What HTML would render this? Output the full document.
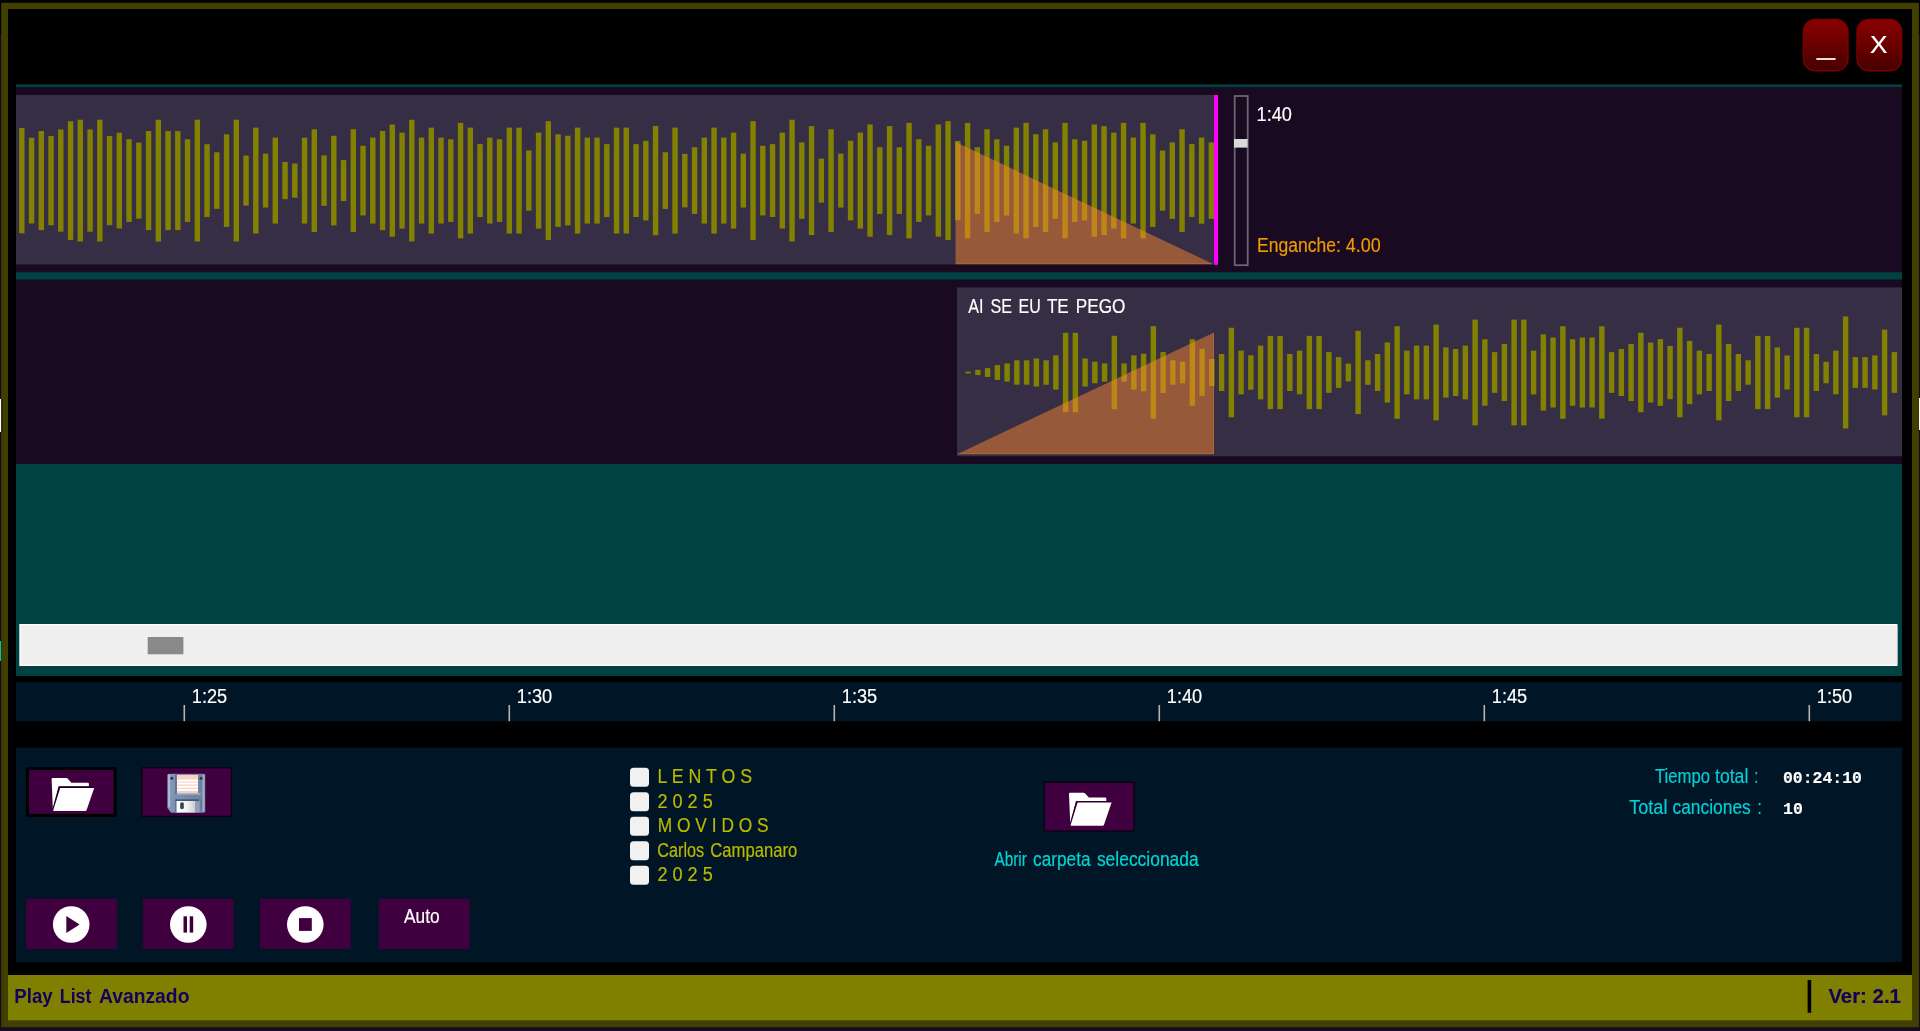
<!DOCTYPE html>
<html lang="es"><head><meta charset="utf-8"><title>Play List Avanzado</title>
<style>html,body{margin:0;padding:0;background:#000;overflow:hidden}svg{display:block}text{white-space:pre}</style>
</head><body>
<svg width="1920" height="1031" viewBox="0 0 1920 1031">
<rect x="0" y="0" width="1920" height="1031" fill="#000000"/>
<rect x="0" y="1027" width="1920" height="4" fill="#180a22"/>
<rect x="0" y="34" width="1.3" height="997" fill="#160a20"/><rect x="1918.8" y="34" width="1.2" height="997" fill="#160a20"/>
<rect x="1.2" y="2.8" width="1917.7" height="1024.4" fill="#414000"/>
<rect x="8" y="9" width="1904" height="1011.5" fill="#000000"/>
<rect x="0" y="399" width="1.3" height="33" fill="#ffffff"/><rect x="1.3" y="399" width="1.3" height="33" fill="#1c1c00"/><rect x="1919" y="398" width="1" height="32" fill="#ffffff"/><rect x="0" y="641" width="1" height="20" fill="#00c8a0"/>
<rect x="16" y="84.4" width="1886" height="591.6" fill="#004242"/>
<rect x="16" y="87" width="1886" height="185.3" fill="#190a22"/>
<rect x="16" y="279.4" width="1886" height="184.6" fill="#190a22"/>
<rect x="16" y="95" width="1198" height="169.4" fill="#362e44"/>
<rect x="957" y="287.4" width="945" height="168.8" fill="#362e44"/>
<g fill="#838200"><rect x="19.10" y="127.94" width="5.40" height="105.33"/><rect x="28.85" y="137.72" width="5.40" height="85.77"/><rect x="38.60" y="131.04" width="5.40" height="99.12"/><rect x="48.35" y="136.01" width="5.40" height="89.18"/><rect x="58.10" y="129.49" width="5.40" height="102.22"/><rect x="67.85" y="121.26" width="5.40" height="118.67"/><rect x="77.60" y="119.71" width="5.40" height="121.78"/><rect x="87.35" y="129.49" width="5.40" height="102.22"/><rect x="97.10" y="119.71" width="5.40" height="121.78"/><rect x="106.85" y="136.01" width="5.40" height="89.18"/><rect x="116.60" y="132.75" width="5.40" height="95.70"/><rect x="126.35" y="139.27" width="5.40" height="82.67"/><rect x="136.10" y="142.53" width="5.40" height="76.15"/><rect x="145.85" y="131.04" width="5.40" height="99.12"/><rect x="155.60" y="119.71" width="5.40" height="121.78"/><rect x="165.35" y="131.04" width="5.40" height="99.12"/><rect x="175.10" y="131.04" width="5.40" height="99.12"/><rect x="184.85" y="139.27" width="5.40" height="82.67"/><rect x="194.60" y="119.71" width="5.40" height="121.78"/><rect x="204.35" y="144.23" width="5.40" height="72.73"/><rect x="214.10" y="152.30" width="5.40" height="56.59"/><rect x="223.85" y="134.30" width="5.40" height="92.60"/><rect x="233.60" y="119.71" width="5.40" height="121.78"/><rect x="243.35" y="155.56" width="5.40" height="50.07"/><rect x="253.10" y="127.62" width="5.40" height="105.95"/><rect x="262.85" y="153.62" width="5.40" height="53.95"/><rect x="272.60" y="137.62" width="5.40" height="85.95"/><rect x="282.35" y="162.00" width="5.40" height="37.20"/><rect x="292.10" y="163.50" width="5.40" height="34.20"/><rect x="301.85" y="137.62" width="5.40" height="85.95"/><rect x="311.60" y="129.25" width="5.40" height="102.70"/><rect x="321.35" y="155.38" width="5.40" height="50.45"/><rect x="331.10" y="135.75" width="5.40" height="89.70"/><rect x="340.85" y="160.12" width="5.40" height="40.95"/><rect x="350.60" y="129.25" width="5.40" height="102.70"/><rect x="360.35" y="145.75" width="5.40" height="69.70"/><rect x="370.10" y="137.62" width="5.40" height="85.95"/><rect x="379.85" y="131.00" width="5.40" height="99.20"/><rect x="389.60" y="124.50" width="5.40" height="112.20"/><rect x="399.35" y="132.62" width="5.40" height="95.95"/><rect x="409.10" y="119.75" width="5.40" height="121.70"/><rect x="418.85" y="137.62" width="5.40" height="85.95"/><rect x="428.60" y="127.62" width="5.40" height="105.95"/><rect x="438.35" y="137.62" width="5.40" height="85.95"/><rect x="448.10" y="139.25" width="5.40" height="82.70"/><rect x="457.85" y="122.88" width="5.40" height="115.45"/><rect x="467.60" y="127.62" width="5.40" height="105.95"/><rect x="477.35" y="144.12" width="5.40" height="72.95"/><rect x="487.10" y="137.62" width="5.40" height="85.95"/><rect x="496.85" y="139.25" width="5.40" height="82.70"/><rect x="506.60" y="127.62" width="5.40" height="105.95"/><rect x="516.35" y="127.62" width="5.40" height="105.95"/><rect x="526.10" y="150.50" width="5.40" height="60.20"/><rect x="535.85" y="132.62" width="5.40" height="95.95"/><rect x="545.60" y="121.12" width="5.40" height="118.95"/><rect x="555.35" y="134.25" width="5.40" height="92.70"/><rect x="565.10" y="135.75" width="5.40" height="89.70"/><rect x="574.85" y="127.62" width="5.40" height="105.95"/><rect x="584.60" y="137.62" width="5.40" height="85.95"/><rect x="594.35" y="137.62" width="5.40" height="85.95"/><rect x="604.10" y="144.12" width="5.40" height="72.95"/><rect x="613.85" y="127.62" width="5.40" height="105.95"/><rect x="623.60" y="127.62" width="5.40" height="105.95"/><rect x="633.35" y="144.12" width="5.40" height="72.95"/><rect x="643.10" y="140.75" width="5.40" height="79.70"/><rect x="652.85" y="126.00" width="5.40" height="109.20"/><rect x="662.60" y="152.25" width="5.40" height="56.70"/><rect x="672.35" y="127.62" width="5.40" height="105.95"/><rect x="682.10" y="153.88" width="5.40" height="53.45"/><rect x="691.85" y="147.25" width="5.40" height="66.70"/><rect x="701.60" y="137.62" width="5.40" height="85.95"/><rect x="711.35" y="127.62" width="5.40" height="105.95"/><rect x="721.10" y="137.62" width="5.40" height="85.95"/><rect x="730.85" y="132.62" width="5.40" height="95.95"/><rect x="740.60" y="153.62" width="5.40" height="53.95"/><rect x="750.35" y="121.12" width="5.40" height="118.95"/><rect x="760.10" y="145.75" width="5.40" height="69.70"/><rect x="769.85" y="144.12" width="5.40" height="72.95"/><rect x="779.60" y="132.62" width="5.40" height="95.95"/><rect x="789.35" y="119.75" width="5.40" height="121.70"/><rect x="799.10" y="142.38" width="5.40" height="76.45"/><rect x="808.85" y="126.12" width="5.40" height="108.95"/><rect x="818.60" y="158.62" width="5.40" height="43.95"/><rect x="828.35" y="129.25" width="5.40" height="102.70"/><rect x="838.10" y="153.62" width="5.40" height="53.95"/><rect x="847.85" y="140.75" width="5.40" height="79.70"/><rect x="857.60" y="132.62" width="5.40" height="95.95"/><rect x="867.35" y="124.50" width="5.40" height="112.20"/><rect x="877.10" y="147.25" width="5.40" height="66.70"/><rect x="886.85" y="126.12" width="5.40" height="108.95"/><rect x="896.60" y="147.25" width="5.40" height="66.70"/><rect x="906.35" y="122.88" width="5.40" height="115.45"/><rect x="916.10" y="139.25" width="5.40" height="82.70"/><rect x="925.85" y="145.75" width="5.40" height="69.70"/><rect x="935.60" y="124.50" width="5.40" height="112.20"/><rect x="945.35" y="121.12" width="5.40" height="118.95"/><rect x="955.10" y="141.00" width="5.40" height="79.20"/><rect x="964.85" y="122.88" width="5.40" height="115.45"/><rect x="974.60" y="147.25" width="5.40" height="66.70"/><rect x="984.35" y="129.25" width="5.40" height="102.70"/><rect x="994.10" y="139.25" width="5.40" height="82.70"/><rect x="1003.85" y="145.75" width="5.40" height="69.70"/><rect x="1013.60" y="127.62" width="5.40" height="105.95"/><rect x="1023.35" y="122.88" width="5.40" height="115.45"/><rect x="1033.10" y="134.25" width="5.40" height="92.70"/><rect x="1042.85" y="129.25" width="5.40" height="102.70"/><rect x="1052.60" y="142.38" width="5.40" height="76.45"/><rect x="1062.35" y="122.88" width="5.40" height="115.45"/><rect x="1072.10" y="139.25" width="5.40" height="82.70"/><rect x="1081.85" y="140.75" width="5.40" height="79.70"/><rect x="1091.60" y="124.50" width="5.40" height="112.20"/><rect x="1101.35" y="126.12" width="5.40" height="108.95"/><rect x="1111.10" y="132.62" width="5.40" height="95.95"/><rect x="1120.85" y="122.88" width="5.40" height="115.45"/><rect x="1130.60" y="137.62" width="5.40" height="85.95"/><rect x="1140.35" y="122.88" width="5.40" height="115.45"/><rect x="1150.10" y="134.25" width="5.40" height="92.70"/><rect x="1159.85" y="150.50" width="5.40" height="60.20"/><rect x="1169.60" y="142.38" width="5.40" height="76.45"/><rect x="1179.35" y="129.25" width="5.40" height="102.70"/><rect x="1189.10" y="144.12" width="5.40" height="72.95"/><rect x="1198.85" y="137.53" width="5.40" height="86.13"/><rect x="1208.60" y="142.38" width="5.40" height="76.45"/></g>
<g fill="#838200"><rect x="965.40" y="371.60" width="5.40" height="1.80"/><rect x="975.15" y="369.90" width="5.40" height="5.20"/><rect x="984.90" y="368.10" width="5.40" height="8.80"/><rect x="994.65" y="365.10" width="5.40" height="14.80"/><rect x="1004.40" y="363.40" width="5.40" height="18.20"/><rect x="1014.15" y="360.30" width="5.40" height="24.40"/><rect x="1023.90" y="360.30" width="5.40" height="24.40"/><rect x="1033.65" y="358.50" width="5.40" height="28.00"/><rect x="1043.40" y="360.30" width="5.40" height="24.40"/><rect x="1053.15" y="355.40" width="5.40" height="34.20"/><rect x="1062.90" y="332.80" width="5.40" height="79.40"/><rect x="1072.65" y="332.80" width="5.40" height="79.40"/><rect x="1082.40" y="358.50" width="5.40" height="28.00"/><rect x="1092.15" y="361.70" width="5.40" height="21.60"/><rect x="1101.90" y="363.40" width="5.40" height="18.20"/><rect x="1111.65" y="335.80" width="5.40" height="73.40"/><rect x="1121.40" y="363.40" width="5.40" height="18.20"/><rect x="1131.15" y="355.40" width="5.40" height="34.20"/><rect x="1140.90" y="353.70" width="5.40" height="37.60"/><rect x="1150.65" y="326.20" width="5.40" height="92.60"/><rect x="1160.40" y="352.00" width="5.40" height="41.00"/><rect x="1170.15" y="360.30" width="5.40" height="24.40"/><rect x="1179.90" y="361.70" width="5.40" height="21.60"/><rect x="1189.65" y="339.25" width="5.40" height="66.50"/><rect x="1199.40" y="349.00" width="5.40" height="47.00"/><rect x="1209.15" y="359.00" width="5.40" height="27.00"/><rect x="1218.90" y="354.00" width="5.40" height="37.00"/><rect x="1228.65" y="327.75" width="5.40" height="89.50"/><rect x="1238.40" y="350.62" width="5.40" height="43.75"/><rect x="1248.15" y="355.25" width="5.40" height="34.50"/><rect x="1257.90" y="345.62" width="5.40" height="53.75"/><rect x="1267.65" y="335.88" width="5.40" height="73.25"/><rect x="1277.40" y="335.88" width="5.40" height="73.25"/><rect x="1287.15" y="354.00" width="5.40" height="37.00"/><rect x="1296.90" y="350.62" width="5.40" height="43.75"/><rect x="1306.65" y="335.88" width="5.40" height="73.25"/><rect x="1316.40" y="335.88" width="5.40" height="73.25"/><rect x="1326.15" y="352.12" width="5.40" height="40.75"/><rect x="1335.90" y="357.12" width="5.40" height="30.75"/><rect x="1345.65" y="363.62" width="5.40" height="17.75"/><rect x="1355.40" y="330.88" width="5.40" height="83.25"/><rect x="1365.15" y="360.25" width="5.40" height="24.50"/><rect x="1374.90" y="354.00" width="5.40" height="37.00"/><rect x="1384.65" y="342.50" width="5.40" height="60.00"/><rect x="1394.40" y="326.25" width="5.40" height="92.50"/><rect x="1404.15" y="350.62" width="5.40" height="43.75"/><rect x="1413.90" y="345.62" width="5.40" height="53.75"/><rect x="1423.65" y="345.62" width="5.40" height="53.75"/><rect x="1433.40" y="324.62" width="5.40" height="95.75"/><rect x="1443.15" y="347.38" width="5.40" height="50.25"/><rect x="1452.90" y="349.00" width="5.40" height="47.00"/><rect x="1462.65" y="345.62" width="5.40" height="53.75"/><rect x="1472.40" y="319.62" width="5.40" height="105.75"/><rect x="1482.15" y="339.25" width="5.40" height="66.50"/><rect x="1491.90" y="352.12" width="5.40" height="40.75"/><rect x="1501.65" y="344.00" width="5.40" height="57.00"/><rect x="1511.40" y="319.62" width="5.40" height="105.75"/><rect x="1521.15" y="319.62" width="5.40" height="105.75"/><rect x="1530.90" y="350.62" width="5.40" height="43.75"/><rect x="1540.65" y="334.38" width="5.40" height="76.25"/><rect x="1550.40" y="337.50" width="5.40" height="70.00"/><rect x="1560.15" y="326.25" width="5.40" height="92.50"/><rect x="1569.90" y="339.25" width="5.40" height="66.50"/><rect x="1579.65" y="337.50" width="5.40" height="70.00"/><rect x="1589.40" y="337.50" width="5.40" height="70.00"/><rect x="1599.15" y="326.25" width="5.40" height="92.50"/><rect x="1608.90" y="352.12" width="5.40" height="40.75"/><rect x="1618.65" y="349.00" width="5.40" height="47.00"/><rect x="1628.40" y="344.00" width="5.40" height="57.00"/><rect x="1638.15" y="332.75" width="5.40" height="79.50"/><rect x="1647.90" y="342.50" width="5.40" height="60.00"/><rect x="1657.65" y="339.12" width="5.40" height="66.75"/><rect x="1667.40" y="345.88" width="5.40" height="53.25"/><rect x="1677.15" y="327.75" width="5.40" height="89.50"/><rect x="1686.90" y="340.88" width="5.40" height="63.25"/><rect x="1696.65" y="350.62" width="5.40" height="43.75"/><rect x="1706.40" y="354.00" width="5.40" height="37.00"/><rect x="1716.15" y="324.62" width="5.40" height="95.75"/><rect x="1725.90" y="344.00" width="5.40" height="57.00"/><rect x="1735.65" y="354.00" width="5.40" height="37.00"/><rect x="1745.40" y="360.25" width="5.40" height="24.50"/><rect x="1755.15" y="335.88" width="5.40" height="73.25"/><rect x="1764.90" y="335.88" width="5.40" height="73.25"/><rect x="1774.65" y="347.38" width="5.40" height="50.25"/><rect x="1784.40" y="355.50" width="5.40" height="34.00"/><rect x="1794.15" y="327.75" width="5.40" height="89.50"/><rect x="1803.90" y="327.75" width="5.40" height="89.50"/><rect x="1813.65" y="354.00" width="5.40" height="37.00"/><rect x="1823.40" y="361.75" width="5.40" height="21.50"/><rect x="1833.15" y="350.62" width="5.40" height="43.75"/><rect x="1842.90" y="316.50" width="5.40" height="112.00"/><rect x="1852.65" y="357.12" width="5.40" height="30.75"/><rect x="1862.40" y="357.12" width="5.40" height="30.75"/><rect x="1872.15" y="355.50" width="5.40" height="34.00"/><rect x="1881.90" y="329.62" width="5.40" height="85.75"/><rect x="1891.65" y="352.12" width="5.40" height="40.75"/></g>
<path d="M955.5 142 L1213.6 264.2 L955.5 264.2 Z" fill="#ff8a30" fill-opacity="0.48"/>
<path d="M956 263.7 H1212" fill="none" stroke="#ff9a40" stroke-opacity="0.22" stroke-width="1"/>
<path d="M957 454.2 L1214 332.4 L1214 454.2 Z" fill="#ff8a30" fill-opacity="0.48"/>
<path d="M958 453.7 H1213.5 V333" fill="none" stroke="#ff9a40" stroke-opacity="0.22" stroke-width="1"/>
<rect x="1214" y="95" width="4" height="169.8" fill="#ff00ff"/>
<rect x="1234.7" y="96" width="13" height="169.2" fill="#190a22" stroke="#69676e" stroke-width="1.8"/>
<rect x="1234" y="139" width="13.6" height="8.6" fill="#d9d9d9"/>
<rect x="19.3" y="624" width="1878.1" height="42" fill="#ffffff"/>
<rect x="20.6" y="625.2" width="1876.8" height="39.6" fill="#efefef"/>
<rect x="147.7" y="637" width="35.7" height="17.3" fill="#898989"/>
<rect x="16" y="682.2" width="1886" height="39" fill="#001526"/>
<rect x="183.50" y="705" width="1.6" height="16.2" fill="#b4b4b4"/>
<rect x="508.50" y="705" width="1.6" height="16.2" fill="#b4b4b4"/>
<rect x="833.50" y="705" width="1.6" height="16.2" fill="#b4b4b4"/>
<rect x="1158.50" y="705" width="1.6" height="16.2" fill="#b4b4b4"/>
<rect x="1483.50" y="705" width="1.6" height="16.2" fill="#b4b4b4"/>
<rect x="1808.50" y="705" width="1.6" height="16.2" fill="#b4b4b4"/>
<rect x="16" y="747.6" width="1886" height="214.5" fill="#001526"/>
<rect x="26" y="767.2" width="90.6" height="49.7" fill="#000000"/>
<rect x="29" y="770" width="84.6" height="43.8" fill="#400040"/>
<g transform="translate(51.60 777.80) scale(1.000)"><path fill="#ffffff" d="M0 1.4 Q0 0.2 1.2 0.2 L14.6 0.2 Q15.6 0.2 16.2 1 L19.8 5 L36.2 5 Q37.3 5 37.3 6.1 L37.3 8.4 L7 8.4 L1.2 30.2 Z"/><path fill="#1c001c" d="M7.3 8.6 L41.6 8.6 L41.6 10.4 L8.9 10.4 L2.2 32.4 L1 31.6 Z"/><path fill="#ffffff" d="M8.6 10.1 L42.6 10.1 L35 32.3 Q34.6 33.2 33.6 33.2 L2.4 33.2 Q1.4 33.2 1.7 32.2 Z"/></g>
<rect x="141.3" y="767.2" width="90.6" height="49.7" fill="#0a0010"/>
<rect x="142.5" y="768.4" width="88.2" height="47.3" fill="#400040"/>
<g transform="translate(167.60 774.10)"><defs><linearGradient id="fg" x1="0" y1="0" x2="1" y2="0"><stop offset="0" stop-color="#8398b8"/><stop offset="0.5" stop-color="#778ba8"/><stop offset="1" stop-color="#6d819f"/></linearGradient><linearGradient id="sg" x1="0" y1="0" x2="1" y2="0"><stop offset="0" stop-color="#ffffff"/><stop offset="0.55" stop-color="#f2f2f2"/><stop offset="1" stop-color="#cfcfcf"/></linearGradient></defs><path d="M1.2 0 H36.2 Q37.4 0 37.4 1.2 V37.1 Q37.4 38.3 36.2 38.3 H3.4 L0 33.7 V1.2 Q0 0 1.2 0 Z" fill="url(#fg)" stroke="#8fa3c2" stroke-width="0.4"/><rect x="0.6" y="0.8" width="1.9" height="32.4" fill="#aebdd6"/><rect x="34.9" y="0.8" width="1.9" height="36.6" fill="#9fb0cb"/><rect x="7.7" y="0.5" width="1.7" height="19.6" fill="#52658a"/><rect x="9.3" y="0.9" width="21.1" height="18.2" fill="#ffffff"/><rect x="9.3" y="0.9" width="21.1" height="4.6" fill="#fcd2c4"/><g fill="#fbcfc0"><rect x="9.3" y="7.4" width="21.1" height="1.1"/><rect x="9.3" y="10.4" width="21.1" height="1.2"/><rect x="9.3" y="13.8" width="21.1" height="1.1"/><rect x="9.3" y="16.8" width="21.1" height="2.3"/></g><rect x="9.3" y="19.1" width="23.5" height="1.3" fill="#a9bad4"/><circle cx="4.2" cy="4.1" r="1.5" fill="#2c3648"/><circle cx="33.5" cy="4.1" r="1.5" fill="#2c3648"/><rect x="8" y="26.9" width="24" height="11.4" fill="#8ea0bd"/><rect x="7.6" y="25.2" width="23.8" height="1.8" fill="#465878"/><rect x="7.6" y="26.9" width="1.5" height="11.4" fill="#5a6d8f"/><rect x="9" y="26.9" width="18.4" height="11.4" fill="url(#sg)"/><rect x="12.6" y="28.1" width="3.6" height="7" rx="1.6" fill="#34405a"/><rect x="33.2" y="25.4" width="0.9" height="9" fill="#586c8e"/></g>
<rect x="1043.8" y="781.6" width="90.8" height="50" fill="#0a0010"/>
<rect x="1045" y="782.8" width="88.4" height="47.6" fill="#400040"/>
<g transform="translate(1069.00 792.50) scale(1.000)"><path fill="#ffffff" d="M0 1.4 Q0 0.2 1.2 0.2 L14.6 0.2 Q15.6 0.2 16.2 1 L19.8 5 L36.2 5 Q37.3 5 37.3 6.1 L37.3 8.4 L7 8.4 L1.2 30.2 Z"/><path fill="#2c002c" d="M7.3 8.6 L41.6 8.6 L41.6 10.4 L8.9 10.4 L2.2 32.4 L1 31.6 Z"/><path fill="#ffffff" d="M8.6 10.1 L42.6 10.1 L35 32.3 Q34.6 33.2 33.6 33.2 L2.4 33.2 Q1.4 33.2 1.7 32.2 Z"/></g>
<rect x="26.00" y="898.8" width="90.8" height="50" fill="#400040"/>
<rect x="142.90" y="898.8" width="90.8" height="50" fill="#400040"/>
<rect x="260.00" y="898.8" width="90.8" height="50" fill="#400040"/>
<rect x="378.80" y="898.8" width="90.8" height="50" fill="#400040"/>
<circle cx="71.2" cy="924.5" r="18.3" fill="#ffffff"/><path d="M66.3 916 L79.6 924.5 L66.3 933 Z" fill="#400040"/>
<circle cx="188.3" cy="924.5" r="18.3" fill="#ffffff"/><rect x="183.5" y="916.3" width="3.5" height="16.3" fill="#400040"/><rect x="189.7" y="916.3" width="3.5" height="16.3" fill="#400040"/>
<circle cx="305.3" cy="924.5" r="18.3" fill="#ffffff"/><rect x="299" y="918.1" width="12.8" height="12.8" fill="#400040"/>
<rect x="630" y="767.80" width="19" height="19" rx="3.5" fill="#f1f1f1"/>
<rect x="630" y="792.30" width="19" height="19" rx="3.5" fill="#f1f1f1"/>
<rect x="630" y="816.80" width="19" height="19" rx="3.5" fill="#f1f1f1"/>
<rect x="630" y="841.30" width="19" height="19" rx="3.5" fill="#f1f1f1"/>
<rect x="630" y="865.80" width="19" height="19" rx="3.5" fill="#f1f1f1"/>
<rect x="8" y="975" width="1904" height="45.5" fill="#808000"/>
<rect x="1807.6" y="980" width="3.6" height="32.8" fill="#000000"/>
<defs><linearGradient id="rg" x1="0" y1="0" x2="0" y2="1"><stop offset="0" stop-color="#8a0000"/><stop offset="1" stop-color="#470000"/></linearGradient></defs>
<rect x="1803.4" y="19.4" width="44.6" height="51.4" rx="12" fill="url(#rg)" stroke="#7c0000" stroke-width="1.4"/>
<rect x="1857" y="19.4" width="44.6" height="51.4" rx="12" fill="url(#rg)" stroke="#7c0000" stroke-width="1.4"/>
<g id="labels" style="filter:blur(0.4px)" stroke-width="0.18">
<text x="1256.60" y="121.30" textLength="35.40" lengthAdjust="spacingAndGlyphs" font-family="'Liberation Sans', Arial, sans-serif" font-size="20.00" font-weight="normal" fill="#ffffff" stroke="#ffffff">1:40</text>
<text y="251.70" font-family="'Liberation Sans', Arial, sans-serif" font-size="20.00" font-weight="normal" fill="#f09c00" stroke="#f09c00"><tspan x="1257.10" textLength="83.69" lengthAdjust="spacingAndGlyphs">Enganche:</tspan> <tspan x="1345.80" textLength="34.98" lengthAdjust="spacingAndGlyphs">4.00</tspan></text>
<text y="313.00" font-family="'Liberation Sans', Arial, sans-serif" font-size="20.00" font-weight="normal" fill="#ffffff" stroke="#ffffff"><tspan x="968.30" textLength="15.20" lengthAdjust="spacingAndGlyphs">AI</tspan> <tspan x="990.50" textLength="21.48" lengthAdjust="spacingAndGlyphs">SE</tspan> <tspan x="1018.60" textLength="22.19" lengthAdjust="spacingAndGlyphs">EU</tspan> <tspan x="1046.90" textLength="21.81" lengthAdjust="spacingAndGlyphs">TE</tspan> <tspan x="1075.70" textLength="49.69" lengthAdjust="spacingAndGlyphs">PEGO</tspan></text>
<text x="191.80" y="703.20" textLength="35.40" lengthAdjust="spacingAndGlyphs" font-family="'Liberation Sans', Arial, sans-serif" font-size="20.00" font-weight="normal" fill="#ffffff" stroke="#ffffff">1:25</text>
<text x="516.80" y="703.20" textLength="35.40" lengthAdjust="spacingAndGlyphs" font-family="'Liberation Sans', Arial, sans-serif" font-size="20.00" font-weight="normal" fill="#ffffff" stroke="#ffffff">1:30</text>
<text x="841.80" y="703.20" textLength="35.40" lengthAdjust="spacingAndGlyphs" font-family="'Liberation Sans', Arial, sans-serif" font-size="20.00" font-weight="normal" fill="#ffffff" stroke="#ffffff">1:35</text>
<text x="1166.80" y="703.20" textLength="35.40" lengthAdjust="spacingAndGlyphs" font-family="'Liberation Sans', Arial, sans-serif" font-size="20.00" font-weight="normal" fill="#ffffff" stroke="#ffffff">1:40</text>
<text x="1491.80" y="703.20" textLength="35.40" lengthAdjust="spacingAndGlyphs" font-family="'Liberation Sans', Arial, sans-serif" font-size="20.00" font-weight="normal" fill="#ffffff" stroke="#ffffff">1:45</text>
<text x="1816.80" y="703.20" textLength="35.40" lengthAdjust="spacingAndGlyphs" font-family="'Liberation Sans', Arial, sans-serif" font-size="20.00" font-weight="normal" fill="#ffffff" stroke="#ffffff">1:50</text>
<text x="657.60" y="783.20" textLength="94.60" lengthAdjust="spacingAndGlyphs" font-family="'Liberation Sans', Arial, sans-serif" font-size="20.00" font-weight="normal" fill="#b9b900" stroke="#b9b900">L E N T O S</text>
<text x="657.40" y="807.70" textLength="55.40" lengthAdjust="spacingAndGlyphs" font-family="'Liberation Sans', Arial, sans-serif" font-size="20.00" font-weight="normal" fill="#b9b900" stroke="#b9b900">2 0 2 5</text>
<text x="657.80" y="832.20" textLength="110.80" lengthAdjust="spacingAndGlyphs" font-family="'Liberation Sans', Arial, sans-serif" font-size="20.00" font-weight="normal" fill="#b9b900" stroke="#b9b900">M O V I D O S</text>
<text y="856.70" font-family="'Liberation Sans', Arial, sans-serif" font-size="20.00" font-weight="normal" fill="#b9b900" stroke="#b9b900"><tspan x="657.30" textLength="46.90" lengthAdjust="spacingAndGlyphs">Carlos</tspan> <tspan x="710.30" textLength="86.90" lengthAdjust="spacingAndGlyphs">Campanaro</tspan></text>
<text x="657.40" y="881.20" textLength="55.40" lengthAdjust="spacingAndGlyphs" font-family="'Liberation Sans', Arial, sans-serif" font-size="20.00" font-weight="normal" fill="#b9b900" stroke="#b9b900">2 0 2 5</text>
<text y="866.00" font-family="'Liberation Sans', Arial, sans-serif" font-size="20.00" font-weight="normal" fill="#00d6d6" stroke="#00d6d6"><tspan x="994.40" textLength="32.48" lengthAdjust="spacingAndGlyphs">Abrir</tspan> <tspan x="1033.10" textLength="57.47" lengthAdjust="spacingAndGlyphs">carpeta</tspan> <tspan x="1096.90" textLength="101.81" lengthAdjust="spacingAndGlyphs">seleccionada</tspan></text>
<text y="783.00" font-family="'Liberation Sans', Arial, sans-serif" font-size="20.00" font-weight="normal" fill="#00d0d8" stroke="#00d0d8"><tspan x="1655.00" textLength="55.00" lengthAdjust="spacingAndGlyphs">Tiempo</tspan> <tspan x="1715.00" textLength="33.30" lengthAdjust="spacingAndGlyphs">total</tspan> <tspan x="1754.20" textLength="4.11" lengthAdjust="spacingAndGlyphs">:</tspan></text>
<text y="814.00" font-family="'Liberation Sans', Arial, sans-serif" font-size="20.00" font-weight="normal" fill="#00d0d8" stroke="#00d0d8"><tspan x="1629.20" textLength="38.30" lengthAdjust="spacingAndGlyphs">Total</tspan> <tspan x="1672.50" textLength="78.31" lengthAdjust="spacingAndGlyphs">canciones</tspan> <tspan x="1757.50" textLength="4.21" lengthAdjust="spacingAndGlyphs">:</tspan></text>
<text x="1783.00" y="783.20" textLength="79.00" lengthAdjust="spacingAndGlyphs" font-family="'Liberation Mono', 'DejaVu Sans Mono', monospace" font-size="16.40" font-weight="bold" fill="#ffffff" stroke="#ffffff">00:24:10</text>
<text x="1783.00" y="814.20" textLength="19.80" lengthAdjust="spacingAndGlyphs" font-family="'Liberation Mono', 'DejaVu Sans Mono', monospace" font-size="16.40" font-weight="bold" fill="#ffffff" stroke="#ffffff">10</text>
<text x="404.00" y="923.00" textLength="35.60" lengthAdjust="spacingAndGlyphs" font-family="'Liberation Sans', Arial, sans-serif" font-size="20.00" font-weight="normal" fill="#ffffff" stroke="#ffffff">Auto</text>
<text y="1002.8" font-family="'Liberation Sans', Arial, sans-serif" font-size="19.6" font-weight="bold" fill="#12005c"><tspan x="14.3" textLength="38.4" lengthAdjust="spacingAndGlyphs">Play</tspan> <tspan x="59.8" textLength="31.6" lengthAdjust="spacingAndGlyphs">List</tspan> <tspan x="98.9" textLength="90.6" lengthAdjust="spacingAndGlyphs">Avanzado</tspan></text>
<text x="1828.40" y="1002.80" textLength="72.50" lengthAdjust="spacingAndGlyphs" font-family="'Liberation Sans', Arial, sans-serif" font-size="20.00" font-weight="bold" fill="#12005c" stroke="#12005c">Ver: 2.1</text>
<text x="1870.00" y="53.00" textLength="17.40" lengthAdjust="spacingAndGlyphs" font-family="'Liberation Sans', Arial, sans-serif" font-size="24.00" font-weight="normal" fill="#ffffff" stroke="#ffffff">X</text>
<text x="1816.90" y="54.10" textLength="18.00" lengthAdjust="spacingAndGlyphs" font-family="'Liberation Sans', Arial, sans-serif" font-size="32.00" font-weight="normal" fill="#f0dede" stroke="#f0dede">_</text>
</g>
</svg>
</body></html>
